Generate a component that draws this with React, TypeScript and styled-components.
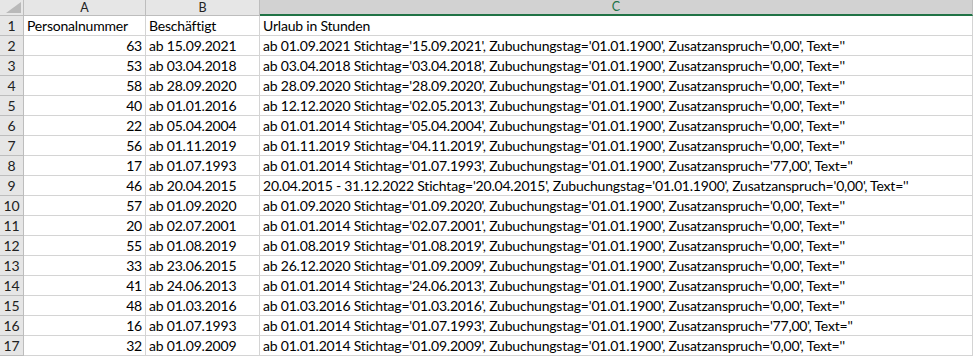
import styled, { createGlobalStyle } from 'styled-components'

const GlobalStyle = createGlobalStyle`
  html, body {
    margin: 0;
    padding: 0;
    background: #ffffff;
  }
  * {
    box-sizing: border-box;
  }
`

const rows: [number, string, string][] = [
  [63, 'ab 15.09.2021', "ab 01.09.2021 Stichtag='15.09.2021', Zubuchungstag='01.01.1900', Zusatzanspruch='0,00', Text=''"],
  [53, 'ab 03.04.2018', "ab 03.04.2018 Stichtag='03.04.2018', Zubuchungstag='01.01.1900', Zusatzanspruch='0,00', Text=''"],
  [58, 'ab 28.09.2020', "ab 28.09.2020 Stichtag='28.09.2020', Zubuchungstag='01.01.1900', Zusatzanspruch='0,00', Text=''"],
  [40, 'ab 01.01.2016', "ab 12.12.2020 Stichtag='02.05.2013', Zubuchungstag='01.01.1900', Zusatzanspruch='0,00', Text=''"],
  [22, 'ab 05.04.2004', "ab 01.01.2014 Stichtag='05.04.2004', Zubuchungstag='01.01.1900', Zusatzanspruch='0,00', Text=''"],
  [56, 'ab 01.11.2019', "ab 01.11.2019 Stichtag='04.11.2019', Zubuchungstag='01.01.1900', Zusatzanspruch='0,00', Text=''"],
  [17, 'ab 01.07.1993', "ab 01.01.2014 Stichtag='01.07.1993', Zubuchungstag='01.01.1900', Zusatzanspruch='77,00', Text=''"],
  [46, 'ab 20.04.2015', "20.04.2015 - 31.12.2022 Stichtag='20.04.2015', Zubuchungstag='01.01.1900', Zusatzanspruch='0,00', Text=''"],
  [57, 'ab 01.09.2020', "ab 01.09.2020 Stichtag='01.09.2020', Zubuchungstag='01.01.1900', Zusatzanspruch='0,00', Text=''"],
  [20, 'ab 02.07.2001', "ab 01.01.2014 Stichtag='02.07.2001', Zubuchungstag='01.01.1900', Zusatzanspruch='0,00', Text=''"],
  [55, 'ab 01.08.2019', "ab 01.08.2019 Stichtag='01.08.2019', Zubuchungstag='01.01.1900', Zusatzanspruch='0,00', Text=''"],
  [33, 'ab 23.06.2015', "ab 26.12.2020 Stichtag='01.09.2009', Zubuchungstag='01.01.1900', Zusatzanspruch='0,00', Text=''"],
  [41, 'ab 24.06.2013', "ab 01.01.2014 Stichtag='24.06.2013', Zubuchungstag='01.01.1900', Zusatzanspruch='0,00', Text=''"],
  [48, 'ab 01.03.2016', "ab 01.03.2016 Stichtag='01.03.2016', Zubuchungstag='01.01.1900', Zusatzanspruch='0,00', Text=''"],
  [16, 'ab 01.07.1993', "ab 01.01.2014 Stichtag='01.07.1993', Zubuchungstag='01.01.1900', Zusatzanspruch='77,00', Text=''"],
  [32, 'ab 01.09.2009', "ab 01.01.2014 Stichtag='01.09.2009', Zubuchungstag='01.01.1900', Zusatzanspruch='0,00', Text=''"],
]

const Sheet = styled.div`
  display: grid;
  grid-template-columns: 24px 122px 114px 713px;
  grid-template-rows: 16px;
  grid-auto-rows: 20px;
  width: 973px;
  font-family: Lato, 'Open Sans', sans-serif;
  font-size: 13.4px;
  color: #000;
`

const Corner = styled.div`
  position: relative;
  background: #e6e6e6;
  border-right: 1px solid #bdbdbd;
  border-bottom: 1px solid #bdbdbd;

  &::after {
    content: '';
    position: absolute;
    right: 2px;
    bottom: 2px;
    width: 0;
    height: 0;
    border-left: 15px solid transparent;
    border-bottom: 11px solid #b9b9b9;
  }
`

const ColHead = styled.div<{ $selected?: boolean }>`
  display: flex;
  align-items: center;
  justify-content: center;
  background: ${(p) => (p.$selected ? '#d2d2d2' : '#e6e6e6')};
  color: ${(p) => (p.$selected ? '#217346' : '#222')};
  border-right: 1px solid #bdbdbd;
  border-bottom: ${(p) => (p.$selected ? '2px solid #217346' : '1px solid #bdbdbd')};
  font-size: 12.5px;
  line-height: 14px;
`

const RowHead = styled.div`
  display: flex;
  align-items: center;
  justify-content: center;
  background: #e6e6e6;
  color: #222;
  border-right: 1px solid #bdbdbd;
  border-bottom: 1px solid #bdbdbd;
  font-size: 14px;
`

const Cell = styled.div<{ $align?: 'left' | 'right' }>`
  display: flex;
  align-items: center;
  justify-content: ${(p) => (p.$align === 'right' ? 'flex-end' : 'flex-start')};
  padding: 0 3px 0 3px;
  border-right: 1px solid #d4d4d4;
  border-bottom: 1px solid #d4d4d4;
  font-size: 14px;
  letter-spacing: -0.2px;
  white-space: nowrap;
  overflow: hidden;
`

export default function App() {
  return (
    <>
      <GlobalStyle />
      <Sheet>
        <Corner />
        <ColHead>A</ColHead>
        <ColHead>B</ColHead>
        <ColHead $selected>C</ColHead>

        <RowHead>1</RowHead>
        <Cell>Personalnummer</Cell>
        <Cell>Beschäftigt</Cell>
        <Cell>Urlaub in Stunden</Cell>

        {rows.map(([nr, since, text], i) => (
          <Row key={i} index={i + 2} nr={nr} since={since} text={text} />
        ))}
      </Sheet>
    </>
  )
}

function Row({ index, nr, since, text }: { index: number; nr: number; since: string; text: string }) {
  return (
    <>
      <RowHead>{index}</RowHead>
      <Cell $align="right">{nr}</Cell>
      <Cell>{since}</Cell>
      <Cell>{text}</Cell>
    </>
  )
}
